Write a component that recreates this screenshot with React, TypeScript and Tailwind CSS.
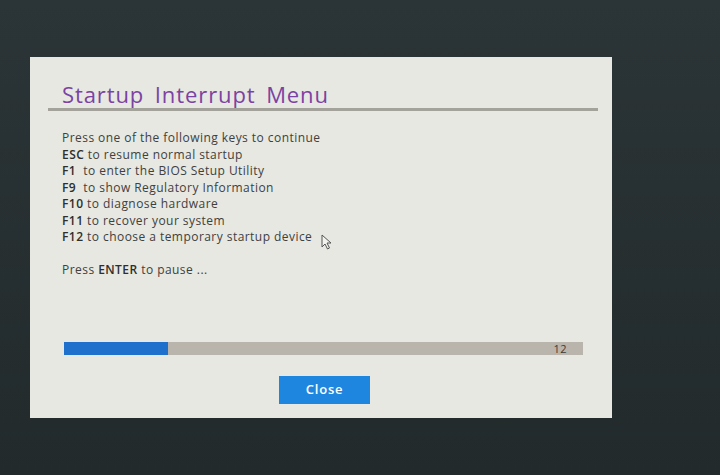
import React from "react";

const lines: [string, string][] = [
  ["ESC", " to resume normal startup"],
  ["F1", "\u00a0\u00a0to enter the BIOS Setup Utility"],
  ["F9", "\u00a0\u00a0to show Regulatory Information"],
  ["F10", " to diagnose hardware"],
  ["F11", " to recover your system"],
  ["F12", " to choose a temporary startup device"],
];

export default function App() {
  return (
    <div
      className="w-[720px] h-[475px] overflow-hidden bg-gradient-to-b from-[#2b3436] to-[#222a2c] pt-[57px] pl-[30px]"
      style={{ fontFamily: '"Open Sans", "Noto Sans", sans-serif' }}
    >
      <div className="relative w-[582px] h-[361px] bg-[#e7e8e1] flex flex-col">
        <div className="pl-[32px] pt-[22px] h-[51px] text-[22px] leading-[30px] text-[#7b42a3] [word-spacing:4px] tracking-[0.9px]">
          Startup Interrupt Menu
        </div>
        <div className="ml-[18px] mr-[14px] h-[3px] bg-[#a3a39b]" />
        <div className="pl-[32px] pt-[19px] text-[12px] leading-[16.5px] text-[#404040] tracking-[0.45px]">
          <div>Press one of the following keys to continue</div>
          {lines.map(([k, t]) => (
            <div key={k} className="whitespace-pre">
              <span className="font-semibold text-[#2e2e2e]">{k}</span>
              {t}
            </div>
          ))}
          <div className="h-[16.5px]" />
          <div>
            Press <span className="font-semibold text-[#2e2e2e]">ENTER</span> to pause ...
          </div>
        </div>
        <div className="mt-[63px] ml-[34px] w-[519px] h-[13px] bg-[#b9b5ad] flex items-center">
          <div className="w-[104px] h-full bg-[#1f6fcc]" />
          <div className="flex-1 text-right pr-[16px] text-[11px] leading-[13px] text-[#3a3a3a] tracking-[0.5px]">12</div>
        </div>
        <div className="flex justify-center mt-[21px] pl-[7px]">
          <div className="w-[91px] h-[28px] bg-[#1f86e0] text-white text-[13px] font-semibold flex items-center justify-center tracking-[0.8px]">
            Close
          </div>
        </div>
        <svg
          className="absolute left-[291px] top-[177px]"
          width="12"
          height="16"
          viewBox="0 0 12 16"
        >
          <path
            d="M1 1 L1 13 L4 10 L6.5 15 L8.5 14 L6 9 L10 9 Z"
            fill="#f2f2ee"
            stroke="#555"
            strokeWidth="1"
            strokeLinejoin="round"
          />
        </svg>
      </div>
    </div>
  );
}
